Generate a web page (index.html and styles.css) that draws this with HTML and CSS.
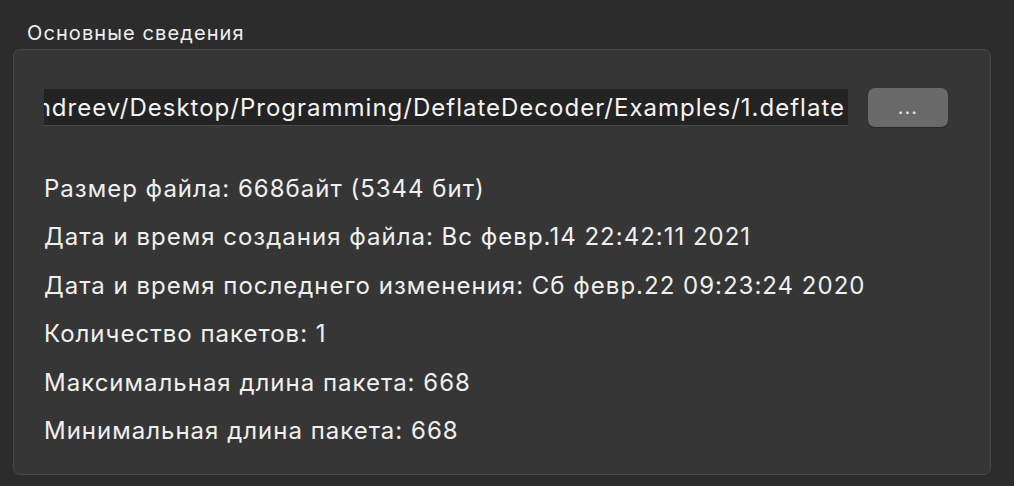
FILE: index.html
```html
<!DOCTYPE html>
<html lang="ru">
<head>
<meta charset="utf-8">
<link rel="stylesheet" href="styles.css">
</head>
<body>
<div class="page">
  <div class="group-title">Основные сведения</div>
  <div class="group">
    <div class="path-row">
      <div class="path-field"><span class="path-text">/Users/andreev/Desktop/Programming/DeflateDecoder/Examples/1.deflate</span></div>
      <button class="browse">...</button>
    </div>
    <div class="info">
      <div class="line">Размер файла: 668байт (5344 бит)</div>
      <div class="line">Дата и время создания файла: Вс февр.14 22:42:11 2021</div>
      <div class="line">Дата и время последнего изменения: Сб февр.22 09:23:24 2020</div>
      <div class="line">Количество пакетов: 1</div>
      <div class="line">Максимальная длина пакета: 668</div>
      <div class="line">Минимальная длина пакета: 668</div>
    </div>
  </div>
</div>
</body>
</html>
```

FILE: styles.css
```css
html, body {
  margin: 0;
  padding: 0;
  background: #2c2c2c;
  width: 1014px;
  height: 486px;
  overflow: hidden;
  font-family: Inter, "Noto Sans", sans-serif;
  color: #e6e6e6;
}
.page {
  padding: 20px 24px 0 13px;
}
.group-title {
  font-size: 20px;
  letter-spacing: 1.1px;
  line-height: 26px;
  padding-left: 14px;
  height: 29px;
  color: #f0f0f0;
}
.group {
  box-sizing: border-box;
  width: 978px;
  height: 426px;
  background: #363636;
  border: 1px solid #474747;
  border-radius: 7px;
  padding: 39px 0 0 30px;
}
.path-row {
  display: flex;
  align-items: center;
  height: 37px;
}
.path-field {
  box-sizing: border-box;
  width: 804px;
  height: 37px;
  background: #232323;
  border-bottom: 1px solid #4a4a4a;
  overflow: hidden;
  display: flex;
  justify-content: flex-end;
  align-items: center;
  white-space: nowrap;
}
.path-text {
  font-size: 24px;
  letter-spacing: 1px;
  color: #f5f5f5;
  padding-right: 3px;
}
.browse {
  margin-left: 20px;
  width: 80px;
  height: 39px;
  border: none;
  border-radius: 7px;
  background: #6a6a6a;
  color: #e8e8e8;
  font-family: inherit;
  font-size: 20px;
  letter-spacing: 1px;
  line-height: 1;
  padding-bottom: 2px;
  box-shadow: 0 1px 1px rgba(0,0,0,0.3);
}
.info {
  padding-top: 39px;
}
.line {
  font-size: 24px;
  letter-spacing: 1px;
  line-height: 48.4px;
  color: #f0f0f0;
  white-space: nowrap;
}
```
